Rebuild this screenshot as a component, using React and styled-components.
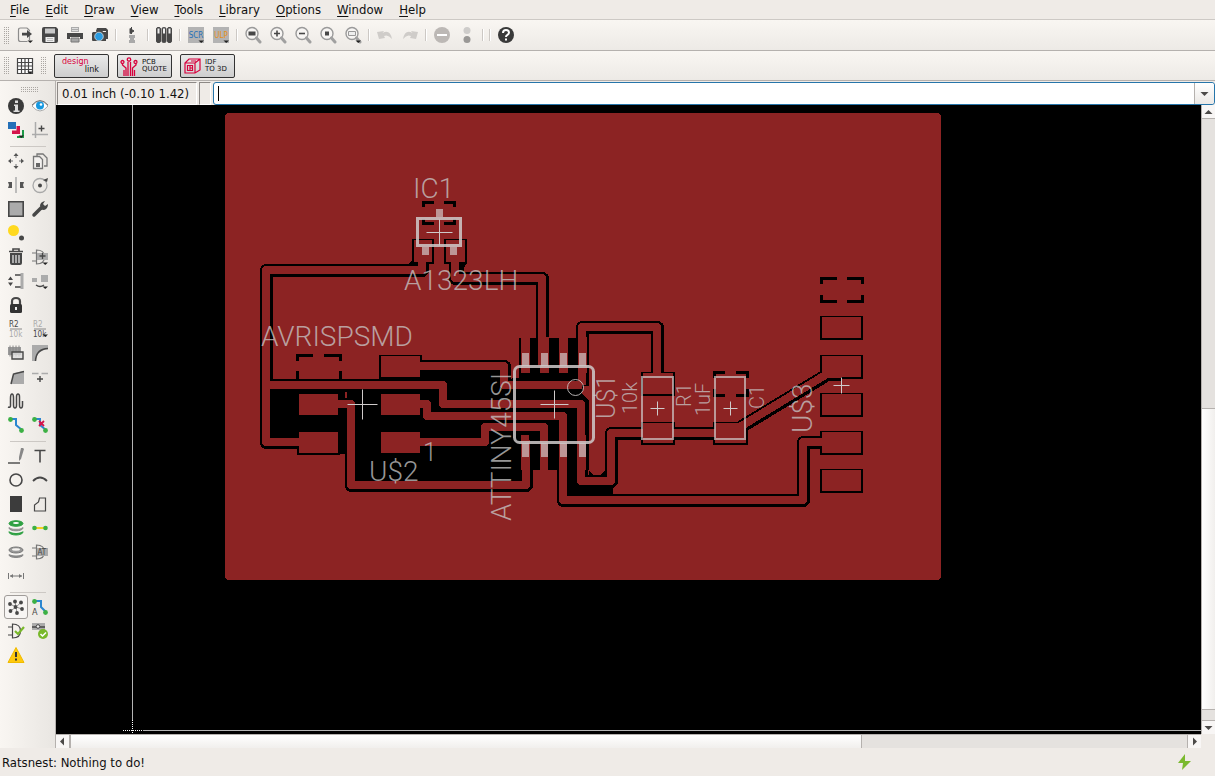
import React, { useState } from "react";
import styled, { createGlobalStyle } from "styled-components";

const GlobalStyle = createGlobalStyle`
  * {
    box-sizing: border-box;
  }

  body {
    margin: 0;
    background: #efebe7;
    color: #111;
    font-family: "DejaVu Sans Condensed", "DejaVu Sans", sans-serif;
    font-size: 13px;
  }

  button,
  input {
    font: inherit;
    color: inherit;
  }
`;

const Window = styled.div`
  display: flex;
  flex-direction: column;
  min-height: 100vh;
`;

const MenuBar = styled.nav`
  display: flex;
  gap: 2px;
  height: 20px;
  padding: 0 3px;
  border-bottom: 1px solid #cdc9c5;
`;

const MenuItem = styled.button`
  padding: 0 7px;
  border: none;
  background: none;
  line-height: 18px;

  u {
    text-underline-offset: 2px;
  }
`;

const Toolbar = styled.div`
  display: flex;
  align-items: center;
  height: ${(p) => (p.$slim ? "30px" : "31px")};
  background: linear-gradient(#f9f6f2, #edeae6);
  border-bottom: 1px solid #b5b1ae;
`;

const Grip = styled.span`
  flex: none;
  width: ${(p) => (p.$wide ? "18px" : "5px")};
  height: ${(p) => (p.$wide ? "5px" : "17px")};
  margin: ${(p) => (p.$wide ? "6px 0 2px 17px" : "0 3px 0 4px")};
  background: repeating-linear-gradient(#aaa6a2 0 1px, transparent 1px 2px);
  mask: repeating-linear-gradient(90deg, #000 0 1px, transparent 1px 2px);
`;

const IconButton = styled.button`
  display: flex;
  flex: none;
  align-items: center;
  justify-content: center;
  width: ${(p) => (p.$small ? "24px" : "25px")};
  height: 24px;
  padding: 0;
  border: 1px solid ${(p) => (p.$active ? "#a09c99" : "transparent")};
  border-radius: 3px;
  background: ${(p) => (p.$active ? "#f7f5f3" : "none")};

  svg {
    display: block;
    width: 18px;
    height: 18px;
  }
`;

const Separator = styled.span`
  flex: none;
  width: 2px;
  height: 12px;
  margin: 0 2px 0 3px;
  background: #fff;
  border-left: 1px solid #ccc8c4;
`;

const PromoGroup = styled.div`
  display: flex;
  gap: 8px;
  margin-left: 5px;
`;

const Promo = styled.button`
  display: flex;
  align-items: center;
  width: 55px;
  height: 24px;
  padding: 0 2px;
  border: 1px solid #333;
  border-radius: 2px;
  background: linear-gradient(#e9e9e9, #cecece);
  font-family: "DejaVu Sans", sans-serif;
  font-size: 7px;
  line-height: 7px;
  text-align: left;

  svg {
    flex: none;
    width: 18px;
    height: 20px;
    margin-right: 4px;
  }
`;

const DesignLink = styled.span`
  display: grid;
  width: 100%;
  padding: 0 7px 0 5px;
  font-size: 8px;
  line-height: 8px;

  span:first-child {
    color: #d8003c;
  }

  span:last-child {
    text-align: right;
  }
`;

const Main = styled.div`
  display: flex;
  flex: 1;
`;

const Sidebar = styled.aside`
  flex: none;
  width: 56px;
  padding-left: 4px;
  background: linear-gradient(90deg, #f9f6f2, #e9e6e2);
  border-right: 1px solid #b5b1ae;
`;

const ToolGrid = styled.div`
  display: grid;
  grid-template-columns: 24px 24px;
  grid-auto-rows: 24px;

  & + & {
    padding-top: 7px;
    background: linear-gradient(#ccc8c4, #ccc8c4) 6px 4px / 36px 1px no-repeat;
  }
`;

const Workspace = styled.main`
  display: flex;
  flex: 1;
  flex-direction: column;
  min-width: 0;
`;

const CommandRow = styled.div`
  display: flex;
  gap: 2px;
  height: 24px;
  padding: 1px 0 0 1px;
`;

const Coordinates = styled.output`
  min-width: ${(p) => (p.$empty ? "12px" : "140px")};
  padding: 0 4px;
  border: 1px solid;
  border-color: #8d8986 #fff #fff #8d8986;
  line-height: 21px;
  white-space: nowrap;
`;

const CommandBox = styled.div`
  display: flex;
  flex: 1;
  align-items: center;
  border: 1px solid #2675aa;
  border-radius: 3px;
  background: #fff;
`;

const Caret = styled.span`
  width: 1px;
  height: 15px;
  margin-left: 4px;
  background: #000;
`;

const CommandInput = styled.input`
  flex: 1;
  min-width: 0;
  height: 20px;
  padding: 0 2px;
  border: none;
  outline: none;
  background: transparent;
  caret-color: transparent;
`;

const DropButton = styled.button`
  display: flex;
  align-items: center;
  justify-content: center;
  align-self: stretch;
  width: 20px;
  padding: 0;
  border: none;
  border-left: 1px solid #b5b1ae;
  border-radius: 0 3px 3px 0;
  background: linear-gradient(#fff, #ebe8e5);
`;

const Stage = styled.div`
  display: grid;
  flex: 1;
  grid-template-columns: minmax(0, 1fr) 14px;
  grid-template-rows: minmax(0, 1fr) 14px;
`;

const Canvas = styled.svg`
  width: 100%;
  height: 100%;
  min-height: 480px;
  background: #000;
  font-family: Roboto, "Liberation Sans", Arial, sans-serif;
  font-weight: 300;
`;

const Scrollbar = styled.div`
  display: flex;
  flex-direction: ${(p) => (p.$vertical ? "column" : "row")};
  background: #e5e2df;
  border: 0 solid #b5b1ae;
  border-width: ${(p) => (p.$vertical ? "0 0 0 1px" : "1px 0 0 0")};
`;

const ScrollButton = styled.button`
  display: flex;
  flex: 0 0 13px;
  align-items: center;
  justify-content: center;
  padding: 0;
  border: none;
  background: #f8f6f5;
`;

const Track = styled.span`
  flex: ${(p) => p.$size} 0 0;
  border: 0 solid #b5b1ae;
  border-width: ${(p) => (p.$vertical ? "1px 0" : "0 1px")};
`;

const Thumb = styled.span`
  flex: ${(p) => p.$size} 0 0;
  background: linear-gradient(${(p) => (p.$vertical ? "90deg" : "180deg")}, #fff, #f1efed);
`;

const StatusBar = styled.footer`
  display: flex;
  align-items: center;
  justify-content: space-between;
  height: 28px;
  padding: 0 23px 0 2px;

  svg {
    width: 16px;
    height: 18px;
  }
`;

const DARK = "#474747";
const MID = "#ababab";
const GREEN = "#3cb044";
const BLUE = "#2470b8";

const Drop = () => <path d="M10.500 13.500h5.500l-2.750 2.500z" fill="#222" />;

const Lens = ({ children }) => (
  <>
    <circle cx="7" cy="6.500" r="6" fill="#f7f5f3" stroke="#9a9a9a" strokeWidth="1.400" />
    <path d="M11.500 11l3.500 4" stroke="#a0a0a0" strokeWidth="3" strokeLinecap="round" />
    {children}
  </>
);

const icons = {
  export: (
    <>
      <path d="M10 1H3.500Q1.500 1 1.500 3v9.500q0 2 2 2h7M10 1l2.500 2.500v1M12.500 9v4" fill="none" stroke="#8c8c8c" strokeWidth="1.200" />
      <path d="M5 5.800h5V3l5 4-5 4V8.500H5z" fill={DARK} />
      <Drop />
    </>
  ),
  save: (
    <>
      <path d="M2 0h12l2 2v12q0 2-2 2H2q-2 0-2-2V2q0-2 2-2z" fill={DARK} />
      <path d="M3 1.500h10v5H3z" fill="#c9c9c9" />
      <path d="M3.500 10h9v5h-9z" fill="#eee" />
      <path d="M5 11.500h6M5 13.500h6" stroke="#bbb" />
    </>
  ),
  print: (
    <>
      <path d="M4 0h8v5H4z" fill="#ababab" />
      <path d="M5 1.500h6M5 3.500h6" stroke="#ddd" />
      <path d="M0 6h16v6h-3v-2H3v2H0z" fill={DARK} />
      <path d="M4 11h8v4H4z" fill="#a5a5a5" stroke="#777" />
    </>
  ),
  camera: (
    <>
      <path d="M5 1h9l2 2v9h-2V4H4z" fill={DARK} />
      <path d="M1 5h3l1-2h5l1 2h3v9H1q-1 0-1-1V6z" fill={DARK} />
      <circle cx="7" cy="9.500" r="4.300" fill="#2a9be0" stroke="#ddd" strokeWidth="0.800" />
    </>
  ),
  usb: (
    <>
      <path d="M7.500 0v7M6 1.500l4 2.500-4 2.500z" fill={DARK} stroke={DARK} />
      <path d="M5 8h6v3H5zM6 11h4v2H6zM5 13h6v3H5z" fill="#a9a9a9" />
    </>
  ),
  tubes: (
    <>
      {[0.5, 6, 11.5].map((x) => (
        <g key={x}>
          <rect x={x} y="0.500" width="4" height="15" rx="1.500" fill={DARK} stroke={DARK} />
          <rect x={x + 1} y="1.500" width="2" height="5" fill="#eee" />
        </g>
      ))}
    </>
  ),
  scr: (
    <>
      <path d="M0 0h16v16H0z" fill="#b3b3b3" />
      <text x="8" y="11" textAnchor="middle" fontSize="8" fill={BLUE} fontFamily="DejaVu Sans Condensed, sans-serif">SCR</text>
      <Drop />
    </>
  ),
  ulp: (
    <>
      <path d="M0 0h16v16H0z" fill="#b3b3b3" />
      <text x="8" y="11" textAnchor="middle" fontSize="8" fill="#e8901a" fontFamily="DejaVu Sans Condensed, sans-serif">ULP</text>
      <Drop />
    </>
  ),
  zoomFit: <Lens><path d="M3.500 4.500h7v4h-7z" fill={DARK} /></Lens>,
  zoomIn: <Lens><path d="M4 6.500h6M7 3.500v6" stroke={DARK} strokeWidth="1.600" /></Lens>,
  zoomOut: <Lens><path d="M4 6.500h6" stroke={DARK} strokeWidth="1.600" /></Lens>,
  zoomRedraw: <Lens><path d="M5 4.500h4v4H5z" fill={DARK} /></Lens>,
  zoomSelect: <Lens><path d="M3.500 4.500h7v4h-7z" fill="#eee" stroke="#999" /><Drop /></Lens>,
  undo: <path d="M0 5l7-1-1.500 2Q13 2 15 12q-4-5-8-3l1 2-6 1z" fill="#cfccc9" />,
  redo: <path d="M16 5l-7-1 1.500 2Q3 2 1 12q4-5 8-3l-1 2 6 1z" fill="#cfccc9" />,
  stop: (
    <>
      <circle cx="8" cy="8" r="8" fill="#bcb8b5" />
      <path d="M3 8h10" stroke="#fff" strokeWidth="2" />
    </>
  ),
  go: (
    <>
      <circle cx="8" cy="3.500" r="3.500" fill="#ceccca" />
      <circle cx="8" cy="12.500" r="3.500" fill="#9a9896" />
    </>
  ),
  help: (
    <>
      <circle cx="8" cy="8" r="8" fill="#3a3a3a" />
      <path d="M5 6q0-3 3-3t3 2.500q0 1.500-1.500 2.300T8 10" fill="none" stroke="#fff" strokeWidth="2" />
      <path d="M7 11.500h2v2H7z" fill="#fff" />
    </>
  ),
  grid: (
    <>
      <path d="M0.500 0.500h15v15h-15zM0.500 4.500h15M0.500 8h15M0.500 11.500h15M4.500 0.500v15M8 0.500v15M11.500 0.500v15" fill="#fff" stroke={DARK} strokeWidth="1.200" />
      <Drop />
    </>
  ),
  info: (
    <>
      <circle cx="8" cy="8" r="8" fill="#3a3a3a" />
      <path d="M7 2.500h3v2.500H7zM6 6.500h4v6h1.500V14h-6v-1.500H7V8H6z" fill="#ddd" />
    </>
  ),
  eye: (
    <>
      <path d="M0 8q8-10 16 0-8 10-16 0z" fill="#fff" stroke="#aaa" />
      <path d="M0 7q8-9 16 0" fill="none" stroke="#777" />
      <circle cx="8" cy="7.500" r="4" fill="#1698e0" />
      <circle cx="9" cy="6.500" r="1.300" fill="#fff" />
    </>
  ),
  layers: (
    <>
      <path d="M0 0h8v7H0z" fill={BLUE} />
      <path d="M8.500 4H12v8H4V8.500h4.500z" fill="#d4144b" />
      <path d="M15 8v7H9" fill="none" stroke="#1c9a48" strokeWidth="2" />
      <Drop />
    </>
  ),
  mark: (
    <>
      <path d="M3.500 0v16M0 12.500h16" stroke={MID} strokeWidth="1.500" />
      <path d="M9.500 3.500v6M6.500 6.500h6" stroke={DARK} strokeWidth="1.400" />
    </>
  ),
  move: (
    <>
      <path d="M8 0l2.500 3h-5zM8 16l2.500-3h-5zM0 8l3-2.500v5zM16 8l-3-2.500v5z" fill="#555" />
      <path d="M8 3v2M8 11v2M3 8h2M11 8h2" stroke="#999" strokeWidth="1.500" />
    </>
  ),
  copy: (
    <>
      <path d="M5 3V1h6l4 4v8h-3" fill="none" stroke="#777" strokeWidth="1.300" />
      <path d="M1.500 3.500h6l3 3v9h-9z" fill="#f3f1ef" stroke="#777" strokeWidth="1.300" />
      <path d="M4 10h4v4H4z" fill="#666" />
    </>
  ),
  mirror: (
    <>
      <path d="M8 0v16" stroke="#aaa" strokeWidth="1.500" />
      <path d="M0 5h4v6H0l1-3zM16 5h-4v6h4l-1-3z" fill="#555" />
    </>
  ),
  rotate: (
    <>
      <circle cx="8" cy="8.500" r="7" fill="none" stroke="#a8a8a8" strokeWidth="1.300" />
      <circle cx="8" cy="8.500" r="2" fill={DARK} />
      <path d="M11 3l5-2-1 4z" fill={DARK} />
    </>
  ),
  group: <path d="M0.800 0.800h14.400v14.400H0.800z" fill={MID} stroke={DARK} strokeWidth="1.600" />,
  wrench: (
    <>
      <path d="M2 14l7-7" stroke={DARK} strokeWidth="3.500" strokeLinecap="round" />
      <path d="M8 5q0-4 5-5l-2 3 2 2 3-2q0 5-4 6-2 0-3-1z" fill={DARK} />
    </>
  ),
  paint: (
    <>
      <circle cx="5.500" cy="5.500" r="5.500" fill="#ffd91f" />
      <circle cx="13.500" cy="13" r="2.500" fill={DARK} />
    </>
  ),
  trash: (
    <>
      <path d="M5 2V0h6v2M1 2.500h14" fill="none" stroke={DARK} strokeWidth="1.600" />
      <path d="M2 4h12v10q0 2-2 2H4q-2 0-2-2z" fill={DARK} />
      <path d="M5 6v8M8 6v8M11 6v8" stroke="#eee" strokeWidth="1.200" />
    </>
  ),
  add: (
    <>
      <path d="M0 4h5M0 12h5M4.500 1q8 0 8 7t-8 7z" fill="none" stroke="#777" strokeWidth="1.200" />
      <path d="M5 4h11v7H5z" fill={MID} />
      <path d="M10.500 4v6M7.500 7h6" stroke={DARK} strokeWidth="1.300" />
      <Drop />
    </>
  ),
  pinswap: (
    <>
      <path d="M2.500 3.500l2.500 3.500H0zM2.500 13L5 9.500H0z" fill={DARK} />
      <path d="M7 2h6M7 14h6" stroke={DARK} strokeWidth="1.600" />
      <path d="M14 0v16" stroke={MID} strokeWidth="3" />
    </>
  ),
  replace: (
    <>
      <path d="M0 5h5v4H0zM9 2h7v7H9z" fill={MID} />
      <path d="M4 12q4 3 8 0" fill="none" stroke={DARK} strokeWidth="1.300" />
      <Drop />
    </>
  ),
  lock: (
    <>
      <path d="M4 8V4.500Q4 1 8 1t4 3.500V8" fill="none" stroke={DARK} strokeWidth="2.200" />
      <rect x="2" y="7" width="12" height="9" rx="1.500" fill="#333" />
      <path d="M8 10v3" stroke="#eee" strokeWidth="2" />
    </>
  ),
  name: (
    <>
      <text x="1" y="6" fontSize="8" fill={DARK} fontFamily="DejaVu Sans Condensed, sans-serif">R2</text>
      <path d="M2 8h12" stroke="#888" />
      <text x="1" y="16" fontSize="8" fill="#aaa" fontFamily="DejaVu Sans Condensed, sans-serif">10k</text>
    </>
  ),
  value: (
    <>
      <text x="1" y="6" fontSize="8" fill="#aaa" fontFamily="DejaVu Sans Condensed, sans-serif">R2</text>
      <path d="M2 8h12" stroke="#888" />
      <text x="1" y="16" fontSize="8" fill={DARK} fontFamily="DejaVu Sans Condensed, sans-serif">10k</text>
      <Drop />
    </>
  ),
  smash: (
    <>
      <path d="M0 2h13v8H0z" fill="#999" />
      <path d="M2 0.500v11M5 0.500v11M8 0.500v11M11 0.500v11" stroke="#888" />
      <path d="M4 7h11v7H4z" fill="#ddd" fillOpacity="0.800" stroke={DARK} strokeWidth="1.400" />
    </>
  ),
  miter: (
    <>
      <path d="M0 0h16v4Q5 5 3.500 16H0z" fill={MID} />
      <path d="M16 3.500Q4 4 3.500 16" fill="none" stroke={DARK} strokeWidth="1.500" />
    </>
  ),
  split: (
    <>
      <path d="M6 4l10-2v13H3z" fill={MID} />
      <path d="M3 15L5.500 5 16 2.500" fill="none" stroke={DARK} strokeWidth="1.500" />
    </>
  ),
  optimize: (
    <>
      <path d="M0 4.500h6.500M9.500 4.500H16" stroke={MID} strokeWidth="1.500" />
      <path d="M8 7v6M5 10h6" stroke={DARK} strokeWidth="1.400" />
    </>
  ),
  meander: (
    <path d="M0 14q2 1 2.500-1V5q0-4 1.500-4t1.500 4v7q0 3 1.500 3t1.500-3V4q0-3 1.500-3t1.500 3v8q0 3 1.500 3t1.500-3V8" fill="none" stroke={DARK} strokeWidth="1.500" />
  ),
  route: (
    <>
      <path d="M2 2h6v6l6 5" fill="none" stroke="#2a86d0" strokeWidth="2" />
      <circle cx="2.500" cy="2.500" r="2.400" fill={GREEN} />
      <circle cx="13.500" cy="13.500" r="2.400" fill={GREEN} />
    </>
  ),
  ripup: (
    <>
      <path d="M2 2h6v6l6 5" fill="none" stroke="#2a86d0" strokeWidth="2" />
      <circle cx="2.500" cy="2.500" r="2.400" fill={GREEN} />
      <circle cx="13.500" cy="13.500" r="2.400" fill={GREEN} />
      <path d="M7 4l5 5M12 4L7 9" stroke="#d4144b" strokeWidth="1.800" />
    </>
  ),
  line: (
    <>
      <path d="M0 15h12" stroke={DARK} strokeWidth="1.400" />
      <path d="M15 0l1 1-3 10-2 2V9l2-9z" fill="#888" />
    </>
  ),
  text: <path d="M2.500 2.500h11M8 2.500v12" fill="none" stroke={DARK} strokeWidth="1.600" />,
  circle: <circle cx="8" cy="8" r="6" fill="none" stroke={DARK} strokeWidth="1.600" />,
  arc: <path d="M1 9q7-7 14 0" fill="none" stroke={DARK} strokeWidth="1.800" />,
  rect: <path d="M2 0h12v16H2z" fill="#3c3c3c" />,
  polygon: <path d="M2.500 15V9l4-3 1-4h6v13z" fill="none" stroke={DARK} strokeWidth="1.200" />,
  via: (
    <>
      <ellipse cx="8" cy="12" rx="7" ry="3" fill="#2ea043" stroke="#2ea043" />
      <ellipse cx="8" cy="10" rx="7.500" ry="3" fill="#f5f3f0" />
      <ellipse cx="8" cy="8" rx="7" ry="2.800" fill="#999" stroke="#888" />
      <ellipse cx="8" cy="5.800" rx="7.500" ry="3" fill="#f5f3f0" />
      <ellipse cx="8" cy="3.500" rx="7" ry="2.800" fill="#2ea043" stroke="#2ea043" />
      <ellipse cx="8" cy="3" rx="3" ry="1" fill="#fff" />
    </>
  ),
  signal: (
    <>
      <path d="M2 8h12" stroke="#f4cf22" strokeWidth="2" />
      <circle cx="2.500" cy="8" r="2.300" fill={GREEN} />
      <circle cx="13.500" cy="8" r="2.300" fill={GREEN} />
    </>
  ),
  hole: (
    <>
      <ellipse cx="8" cy="11" rx="7" ry="2.500" fill="#888" stroke="#888" />
      <ellipse cx="8" cy="9" rx="7.500" ry="2.500" fill="#f5f3f0" />
      <ellipse cx="8" cy="6" rx="7" ry="3" fill="#999" stroke="#777" />
      <ellipse cx="8" cy="5.500" rx="4" ry="1.200" fill="#f5f3f0" />
    </>
  ),
  attribute: (
    <>
      <path d="M0 4h5M0 12h5M4.500 1q8 0 8 7t-8 7z" fill="none" stroke="#777" strokeWidth="1.200" />
      <path d="M5 4h11v8H5z" fill={MID} />
      <text x="5.500" y="11" fontSize="8" fill={DARK} fontFamily="DejaVu Sans Condensed, sans-serif">AT</text>
    </>
  ),
  dimension: (
    <>
      <path d="M0.500 5v6M15.500 5v6M2 8h12" stroke="#777" />
      <path d="M2 8l3-2v4zM14 8l-3-2v4z" fill="#777" />
    </>
  ),
  ratsnest: (
    <>
      <path d="M8 8L2 5M8 8l-1-5.500M8 8l5-4.500M8 8l6 2M8 8l-5.500 4M8 8l1 6" stroke="#777" strokeWidth="0.800" />
      {[[2, 5], [7, 2.5], [13, 3.5], [7.5, 8], [14, 10], [2.5, 12], [9, 14]].map(([x, y]) => (
        <circle key={x} cx={x} cy={y} r="1.900" fill={DARK} />
      ))}
    </>
  ),
  auto: (
    <>
      <path d="M2 2h7v6l5 5" fill="none" stroke="#2a86d0" strokeWidth="2" />
      <circle cx="2.500" cy="2.500" r="2.400" fill={GREEN} />
      <circle cx="13.500" cy="13.500" r="2.400" fill={GREEN} />
      <text x="0" y="16" fontSize="9" fill={DARK} fontFamily="DejaVu Sans Condensed, sans-serif">A</text>
    </>
  ),
  erc: (
    <>
      <path d="M0 4h5M0 12h5M4.500 1q8 0 8 7t-8 7z" fill="none" stroke={DARK} strokeWidth="1.200" />
      <path d="M7 8l3 3 6-7" fill="none" stroke="#78b82a" strokeWidth="2.200" />
    </>
  ),
  drc: (
    <>
      <path d="M0 0h13v7H0z" fill={MID} />
      <path d="M0 4h13" stroke={DARK} strokeWidth="1.500" />
      <circle cx="6" cy="3.500" r="1.800" fill="#eee" stroke={DARK} />
      <circle cx="11" cy="11" r="5" fill="#78b82a" />
      <path d="M8.500 11l2 2 3.500-3.500" fill="none" stroke="#fff" strokeWidth="1.500" />
    </>
  ),
  errors: (
    <>
      <path d="M8 0.500l8 15H0z" fill="#ffc90e" stroke="#f0bb00" />
      <path d="M7 5h2v5H7zM7 11.500h2v2H7z" fill="#333" />
    </>
  ),
};

const ToolIcon = ({ name }) => (
  <svg viewBox="-1 -1 18 18" aria-hidden="true">
    {icons[name]}
  </svg>
);

const Arrow = ({ d }) => (
  <svg width="9" height="9" viewBox="0 0 9 9" aria-hidden="true">
    <path d={d} fill="#4c4a48" />
  </svg>
);

const arrows = {
  up: "M0.500 7l4-4 4 4z",
  down: "M0.500 3h8l-4 4z",
  left: "M6 0.500v8l-4-4z",
  right: "M3 0.500v8l4-4z",
};

const menus = ["File", "Edit", "Draw", "View", "Tools", "Library", "Options", "Window", "Help"];

const mainTools = [
  ["export", "save", "print", "camera"],
  ["usb"],
  ["tubes"],
  ["scr", "ulp"],
  ["zoomFit", "zoomIn", "zoomOut", "zoomRedraw", "zoomSelect"],
  ["undo", "redo"],
  ["stop", "go"],
  [],
  ["help"],
];

const sideTools = [
  ["info", "eye", "layers", "mark"],
  [
    "move", "copy", "mirror", "rotate", "group", "wrench", "paint", null,
    "trash", "add", "pinswap", "replace", "lock", null, "name", "value",
    "smash", "miter", "split", "optimize", "meander", null, "route", "ripup",
  ],
  ["line", "text", "circle", "arc", "rect", "polygon", "via", "signal", "hole", "attribute", "dimension", null],
  ["ratsnest", "auto", "erc", "drc", "errors", null],
];

// board artwork, in board pixels
const COPPER = "#8c2323";

const traces = [
  "M422 250V270H266V442H318",
  "M266 385H443V404H581V481H611V433H730L743 425L827 374H841",
  "M455 250V278H542V365",
  "M582 385V327H657V384",
  "M400 366H504V385H582",
  "M400 404H427V416H563V500H803V442H841",
  "M400 442H485V427H544V466",
  "M318 404H351V485H526V440",
];

const voids = [
  [272, 379, 40, 68],
  [299, 379, 46, 75],
  [347, 379, 173, 104],
  [420, 368, 82, 14],
  [519, 338, 70, 46],
  [512, 378, 70, 18],
  [512, 390, 77, 80],
  [566, 440, 20, 55],
  [566, 482, 47, 13],
];

// x, y, width, height
const isolatedPads = [
  [414, 240, 18, 22],
  [446, 240, 19, 22],
  [381, 356, 39, 21],
  [299, 394, 39, 21],
  [381, 394, 39, 21],
  [299, 432, 39, 21],
  [381, 432, 39, 21],
  [643, 373, 30, 21],
  [643, 423, 30, 20],
  [715, 423, 31, 20],
  [822, 317, 39, 21],
  [822, 356, 39, 21],
  [822, 394, 39, 21],
  [822, 432, 39, 21],
  [822, 470, 39, 21],
];

const groundPads = [
  "M423.500 207V202H434M444 202H454.500V207M423.500 219V223H434M444 223H454.500V219",
  "M297.500 361V355H313M324 355H340V361M297.500 371V381M340 371V381",
  "M714.500 378V372H725M736 372H747V378M714.500 389V395H725M736 395H747V389",
  "M821.500 284V278.500H837M847 278.500H862.500V284M821.500 295V301.500H837M847 301.500H862.500V295",
  "M520.500 338V353M520.500 360V367",
];

// places where the pour rounds off into a clearance
const pourFillets = [
  "M411 261H414V265H407z",
  "M462 262H467L464 268V273H461z",
  "M421 262H428V272L421 276z",
  "M589 471L594 476H589zM605 470V476H599z",
];

const smdPins = [
  [436, 209, 7, 8],
  [422, 247, 7, 8],
  [450, 247, 7, 8],
  ...[522, 541, 560, 579].flatMap((x) => [
    [x, 353, 7, 13],
    [x, 443, 7, 14],
  ]),
];

const crosses = [
  [439.5, 232.5, 13],
  [362.5, 404.5, 15],
  [554.5, 404.5, 14],
  [657.5, 408.5, 7],
  [730.5, 408.5, 7],
  [841.5, 385.5, 8],
];

const labels = [
  { text: "IC1", x: 413, y: 198, size: 28 },
  { text: "A1323LH", x: 404, y: 290, size: 28 },
  { text: "AVRISPSMD", x: 261, y: 346, size: 28 },
  { text: "U$2", x: 369, y: 481, size: 28 },
  { text: "1", x: 423, y: 461, size: 25 },
  { text: "ATTINY45SI", x: 511, y: 521, size: 28, turned: true },
  { text: "U$1", x: 615, y: 419, size: 25, turned: true },
  { text: "10k", x: 637, y: 414, size: 20, turned: true },
  { text: "R1", x: 691, y: 407, size: 20, turned: true },
  { text: "1uF", x: 710, y: 416, size: 20, turned: true },
  { text: "C1", x: 764, y: 409, size: 20, turned: true },
  { text: "U$3", x: 812, y: 433, size: 28, turned: true },
];

const Board = () => (
  <Canvas role="img" aria-label="Board layout">
    <g transform="translate(-56 -105)">
      <g shapeRendering="crispEdges">
        <rect x="225" y="113" width="716" height="467" rx="4" fill={COPPER} />
        <g fill="none" stroke="#000" strokeWidth="13" strokeLinejoin="round" transform="translate(0.500 0.500)">
          {traces.map((d) => (
            <path key={d} d={d} />
          ))}
        </g>
        {isolatedPads.map(([x, y, w, h]) => (
          <rect key={`${x}-${y}`} x={x - 2} y={y - 1} width={w + 4} height={h + 3} rx="1" />
        ))}
        {voids.map(([x, y, w, h]) => (
          <rect key={`${x}-${y}`} x={x} y={y} width={w} height={h} />
        ))}
        {pourFillets.map((d) => (
          <path key={d} d={d} />
        ))}
        {groundPads.map((d) => (
          <path key={d} d={d} fill="none" stroke="#000" strokeWidth="3" />
        ))}
        <g fill="none" stroke={COPPER} strokeWidth="8" strokeLinejoin="round">
          {traces.map((d) => (
            <path key={d} d={d} />
          ))}
        </g>
        <g fill={COPPER}>
          {isolatedPads.map(([x, y, w, h]) => (
            <rect key={`${x}-${y}`} x={x} y={y} width={w} height={h} />
          ))}
          <rect x="299" y="357" width="39" height="20" />
          <rect x="273" y="371" width="22" height="7" rx="2" />
          <rect x="343" y="371" width="34" height="7" rx="2" />
          {[521, 540, 559, 578].map((x) => (
            <React.Fragment key={x}>
              <rect x={x} y="337" width="9" height="36" />
              <rect x={x} y="435" width="8" height="35" />
            </React.Fragment>
          ))}
          <path d="M590 385L582 391V394L590 401z" />
        </g>
      </g>
      <g fill="#d0c4c4" fillOpacity="0.720">
        {smdPins.map(([x, y, w, h]) => (
          <rect key={`${x}-${y}`} x={x} y={y} width={w} height={h} />
        ))}
      </g>
      <g fill="none" stroke="#cfcaca" strokeOpacity="0.850">
        <rect x="417.500" y="218.500" width="43" height="27" strokeWidth="3" />
        <rect x="514.500" y="366.500" width="79" height="76" rx="5" strokeWidth="3" />
        <rect x="642" y="377" width="31" height="62" strokeWidth="2" strokeOpacity="0.700" />
        <rect x="715" y="377" width="30" height="62" strokeWidth="2" strokeOpacity="0.700" />
        <circle cx="575.500" cy="387.500" r="8" />
        {crosses.map(([x, y, r]) => (
          <path key={x} d={`M${x - r} ${y}h${2 * r}M${x} ${y - r}v${2 * r}`} strokeOpacity="1" />
        ))}
      </g>
      <g fill="#c9c9c9" fillOpacity="0.750">
        {labels.map(({ text, x, y, size, turned }) => (
          <text key={`${text}-${x}`} transform={`translate(${x} ${y})${turned ? " rotate(-90)" : ""}`} fontSize={size}>
            {text}
          </text>
        ))}
      </g>
      <g stroke="#b4b4b4" shapeRendering="crispEdges">
        <path d="M132.500 105V720M143 730.500H4000" />
        <path d="M132.500 720V734M123 730.500H143" stroke="#fff" strokeDasharray="1 1" />
      </g>
    </g>
  </Canvas>
);

const App = () => {
  const [command, setCommand] = useState("");
  const [activeTool, setActiveTool] = useState("ratsnest");

  return (
    <Window>
      <GlobalStyle />
      <MenuBar>
        {menus.map((menu) => (
          <MenuItem key={menu}>
            <u>{menu[0]}</u>
            {menu.slice(1)}
          </MenuItem>
        ))}
      </MenuBar>
      <Toolbar>
        <Grip />
        {mainTools.map((group, i) => (
          <React.Fragment key={i}>
            {i > 0 && <Separator />}
            {group.map((name) => (
              <IconButton key={name} aria-label={name}>
                <ToolIcon name={name} />
              </IconButton>
            ))}
          </React.Fragment>
        ))}
      </Toolbar>
      <Toolbar $slim>
        <Grip />
        <IconButton aria-label="grid">
          <ToolIcon name="grid" />
        </IconButton>
        <Grip />
        <PromoGroup>
          <Promo>
            <DesignLink>
              <span>design</span>
              <span>link</span>
            </DesignLink>
          </Promo>
          <Promo>
            <svg viewBox="0 0 18 20" fill="none" stroke="#d8003c" strokeWidth="1.300" aria-hidden="true">
              <path d="M6 20v-8L2.500 9V7.500M8 20V6M10.500 20V6M12.500 20v-8L16 9V7.500M4 20v-6M14.500 20v-6" />
              <circle cx="2.500" cy="6" r="1.500" />
              <circle cx="9" cy="3.500" r="1.700" />
              <circle cx="15.500" cy="6" r="1.500" />
            </svg>
            <span>PCB QUOTE</span>
          </Promo>
          <Promo>
            <svg viewBox="0 0 18 20" fill="none" stroke="#d8003c" strokeWidth="1.200" aria-hidden="true">
              <path d="M6 3h11v11l-5 3H2V7zM2 7h10v10M12 7l5-4M4.500 9.500h5v5h-5zM7 9.500v5M7 12h2.500M8 5h5" />
            </svg>
            <span>IDF<br />TO 3D</span>
          </Promo>
        </PromoGroup>
      </Toolbar>
      <Main>
        <Sidebar>
          <Grip $wide as="div" />
          {sideTools.map((group, i) => (
            <ToolGrid key={i}>
              {group.map((name, j) =>
                name ? (
                  <IconButton
                    key={name}
                    $small
                    $active={name === activeTool}
                    aria-label={name}
                    onClick={() => setActiveTool(name)}
                  >
                    <ToolIcon name={name} />
                  </IconButton>
                ) : (
                  <span key={j} />
                )
              )}
            </ToolGrid>
          ))}
        </Sidebar>
        <Workspace>
          <CommandRow>
            <Coordinates>0.01 inch (-0.10 1.42)</Coordinates>
            <Coordinates $empty />
            <CommandBox>
              <Caret />
              <CommandInput aria-label="Command" value={command} onChange={(e) => setCommand(e.target.value)} />
              <DropButton aria-label="Command history">
                <Arrow d={arrows.down} />
              </DropButton>
            </CommandBox>
          </CommandRow>
          <Stage>
            <Board />
            <Scrollbar $vertical>
              <ScrollButton aria-label="Scroll up">
                <Arrow d={arrows.up} />
              </ScrollButton>
              <Track $vertical $size={290} />
              <Thumb $vertical $size={302} />
              <Track $vertical $size={10} />
              <ScrollButton aria-label="Scroll down">
                <Arrow d={arrows.down} />
              </ScrollButton>
            </Scrollbar>
            <Scrollbar>
              <ScrollButton aria-label="Scroll left">
                <Arrow d={arrows.left} />
              </ScrollButton>
              <Track $size={0} />
              <Thumb $size={792} />
              <Track $size={326} />
              <ScrollButton aria-label="Scroll right">
                <Arrow d={arrows.right} />
              </ScrollButton>
            </Scrollbar>
          </Stage>
        </Workspace>
      </Main>
      <StatusBar>
        <span>Ratsnest: Nothing to do!</span>
        <svg viewBox="0 0 16 18" aria-hidden="true">
          <path d="M9 1L2 10h5l-1 7 9-9H9z" fill="#7ab92e" />
        </svg>
      </StatusBar>
    </Window>
  );
};

export default App;
